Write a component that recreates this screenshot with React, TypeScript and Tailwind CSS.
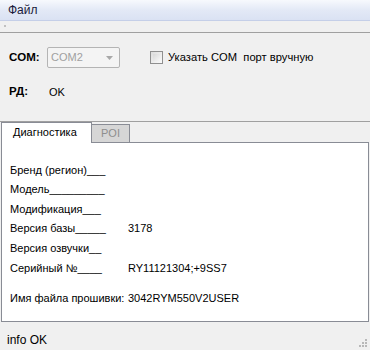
import React from "react";

const font = { fontFamily: '"Liberation Sans", Arial, sans-serif' };

function Row({ label, value }: { label: string; value?: string }) {
  return (
    <div className="flex h-[19.6px] items-center">
      <span className="w-[118px] shrink-0">{label}</span>
      {value && <span>{value}</span>}
    </div>
  );
}

export default function App() {
  return (
    <div
      className="relative flex h-[350px] w-[370px] flex-col overflow-hidden bg-[#f0f0f0] text-[11px] text-black"
      style={font}
    >
      {/* menu bar */}
      <div className="flex h-[21px] shrink-0 items-center border-b border-[#c5cfe8] bg-gradient-to-b from-[#f7f9fd] via-[#e3e9f6] to-[#dae2f3] pl-[8px] pr-[1px] text-[12px] text-[#1a1a3a]">
        <span>Файл</span>
      </div>
      {/* toolbar strip */}
      <div className="flex h-[12px] shrink-0 items-start border-b border-[#a0a0a0] pl-[4px] pt-[4px]">
        <div className="h-[2px] w-[2px] bg-[#c0c0c0]" />
      </div>
      {/* top panel */}
      <div className="flex h-[89px] shrink-0 flex-col border-b border-[#a0a0a0] pl-[9px] pt-[14px]">
        <div className="flex h-[21px] items-center">
          <span className="w-[38px] font-bold text-[11.5px]">COM:</span>
          <div className="flex h-[21px] w-[73px] items-center justify-between rounded-[2px] border border-[#b4b4b4] bg-[#f4f4f4] pl-[3px] pr-[6px] text-[#a0a0a0]">
            <span>COM2</span>
            <svg width="7" height="4" viewBox="0 0 7 4">
              <path d="M0 0 H7 L3.5 4 Z" fill="#a8a8a8" />
            </svg>
          </div>
          <div className="ml-[30px] flex items-center">
            <div className="h-[13px] w-[13px] border border-[#8f8f8f] bg-gradient-to-br from-[#dcdcdc] to-[#fafafa] p-[2px]">
              <div className="h-full w-full bg-gradient-to-br from-[#d8d8d8] to-[#f6f6f6]" />
            </div>
            <span className="ml-[5px] text-[11.2px]">Указать COM&nbsp;&nbsp;порт вручную</span>
          </div>
        </div>
        <div className="mt-[14px] flex h-[20px] items-center">
          <span className="w-[40px] font-bold text-[11.5px]">РД:</span>
          <span>OK</span>
        </div>
      </div>
      {/* tabs */}
      <div className="flex flex-col pl-[1px] pr-[1px]">
        <div className="relative z-10 flex h-[21px] items-end">
          <div className="flex h-[21px] w-[91px] items-center border-l border-r border-t border-[#898c95] bg-white pb-[1px] pl-[11px]">
            Диагностика
          </div>
          <div className="mb-[1px] flex h-[18px] w-[38px] items-center border-r border-t border-[#898c95] bg-[#d6d6d6] pl-[9px] text-[#8e8e8e]">
            POI
          </div>
        </div>
        <div className="-mt-[1px] flex h-[180px] flex-col border border-[#898c95] bg-white pl-[8px] pt-[17px]">
          <Row label="Бренд (регион)___" />
          <Row label="Модель_________" />
          <Row label="Модификация___" />
          <Row label="Версия базы_____" value="3178" />
          <Row label="Версия озвучки__" />
          <Row label="Серийный №____" value="RY11121304;+9SS7" />
          <div className="mt-[11px] flex h-[19.6px] items-center">
            <span className="w-[118px] shrink-0">Имя файла прошивки:</span>
            <span>3042RYM550V2USER</span>
          </div>
        </div>
      </div>
      {/* status bar */}
      <div className="flex flex-1 items-center justify-between pl-[7px] pr-[3px] pt-[7px] text-[12px]">
        <span>info OK</span>
        <svg width="10" height="10" viewBox="0 0 10 10" className="self-end mb-[3px]">
          {[
            [8, 2],
            [5, 5],
            [8, 5],
            [2, 8],
            [5, 8],
            [8, 8],
          ].map(([x, y], i) => (
            <rect key={i} x={x} y={y} width="2" height="2" fill="#b8b8b8" />
          ))}
        </svg>
      </div>
    </div>
  );
}
